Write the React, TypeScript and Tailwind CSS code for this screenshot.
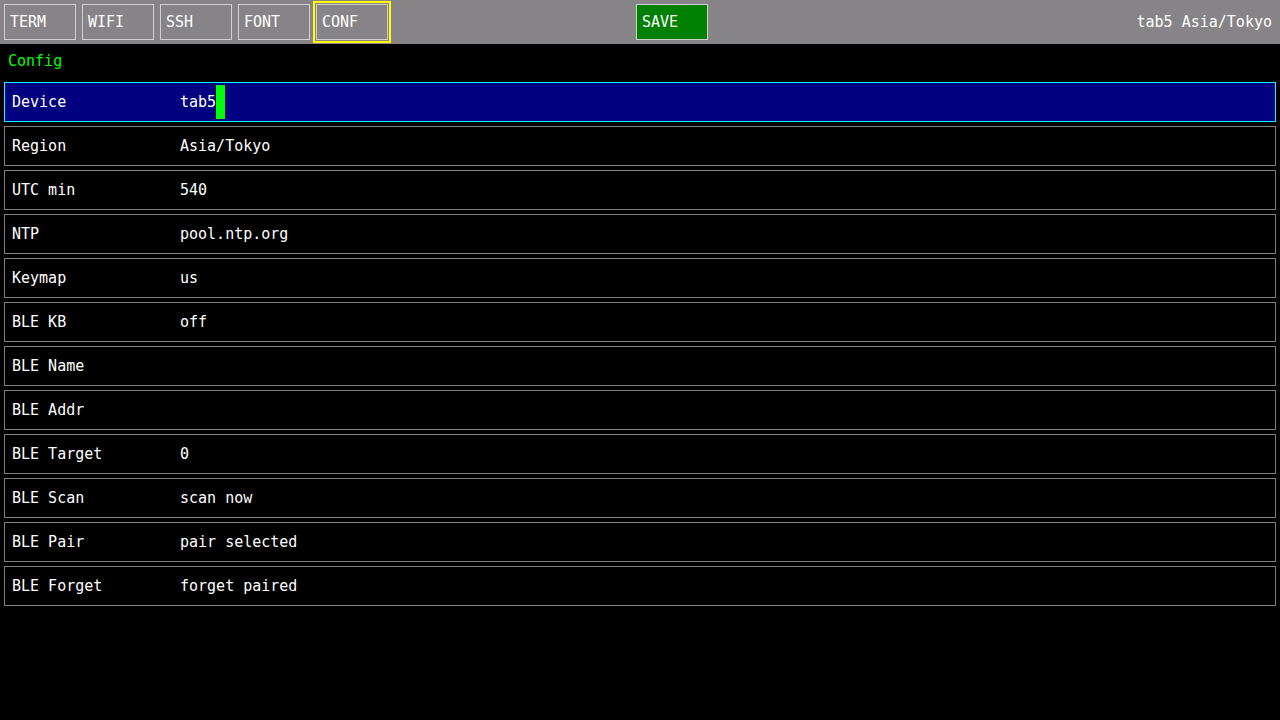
const tabs = ["TERM", "WIFI", "SSH", "FONT", "CONF"]

const rows: { label: string; value: string }[] = [
  { label: "Device", value: "tab5" },
  { label: "Region", value: "Asia/Tokyo" },
  { label: "UTC min", value: "540" },
  { label: "NTP", value: "pool.ntp.org" },
  { label: "Keymap", value: "us" },
  { label: "BLE KB", value: "off" },
  { label: "BLE Name", value: "" },
  { label: "BLE Addr", value: "" },
  { label: "BLE Target", value: "0" },
  { label: "BLE Scan", value: "scan now" },
  { label: "BLE Pair", value: "pair selected" },
  { label: "BLE Forget", value: "forget paired" },
]

export default function App() {
  const active = "CONF"
  const editing = 0

  return (
    <div
      className="w-[1280px] h-[720px] bg-black text-white text-[15px] leading-none overflow-hidden"
      style={{ fontFamily: '"DejaVu Sans Mono", "Liberation Mono", monospace' }}
    >
      {/* top bar */}
      <div className="h-[44px] bg-[#868486] flex items-center pl-[4px] pr-[8px]">
        <div className="flex gap-[6px]">
          {tabs.map((t) => (
            <div
              key={t}
              className={
                "w-[72px] h-[36px] border border-[#d0d0d0] flex items-center pl-[5px] pt-[1px] " +
                (t === active ? "outline-2 outline-offset-1 outline-[#ffff00]" : "")
              }
            >
              {t}
            </div>
          ))}
        </div>
        <div className="ml-[248px] w-[72px] h-[36px] bg-[#008000] border border-[#d0d0d0] flex items-center pl-[5px] pt-[1px]">
          SAVE
        </div>
        <div className="ml-auto pt-[1px]">tab5 Asia/Tokyo</div>
      </div>

      <div className="h-[38px] flex items-center pl-[8px] pb-[3px] text-[#00ff00]">Config</div>

      {/* settings list */}
      <div className="flex flex-col gap-[4px] px-[4px]">
        {rows.map((r, i) => (
          <div
            key={r.label}
            className={
              "h-[40px] border flex items-center pl-[7px] " +
              (i === editing ? "bg-[#000080] border-[#00ffff]" : "border-[#808080]")
            }
          >
            <span className="w-[168px]">{r.label}</span>
            <span className="flex items-center">
              {r.value}
              {i === editing && <span className="w-[9px] h-[34px] bg-[#00ff00]" />}
            </span>
          </div>
        ))}
      </div>
    </div>
  )
}
